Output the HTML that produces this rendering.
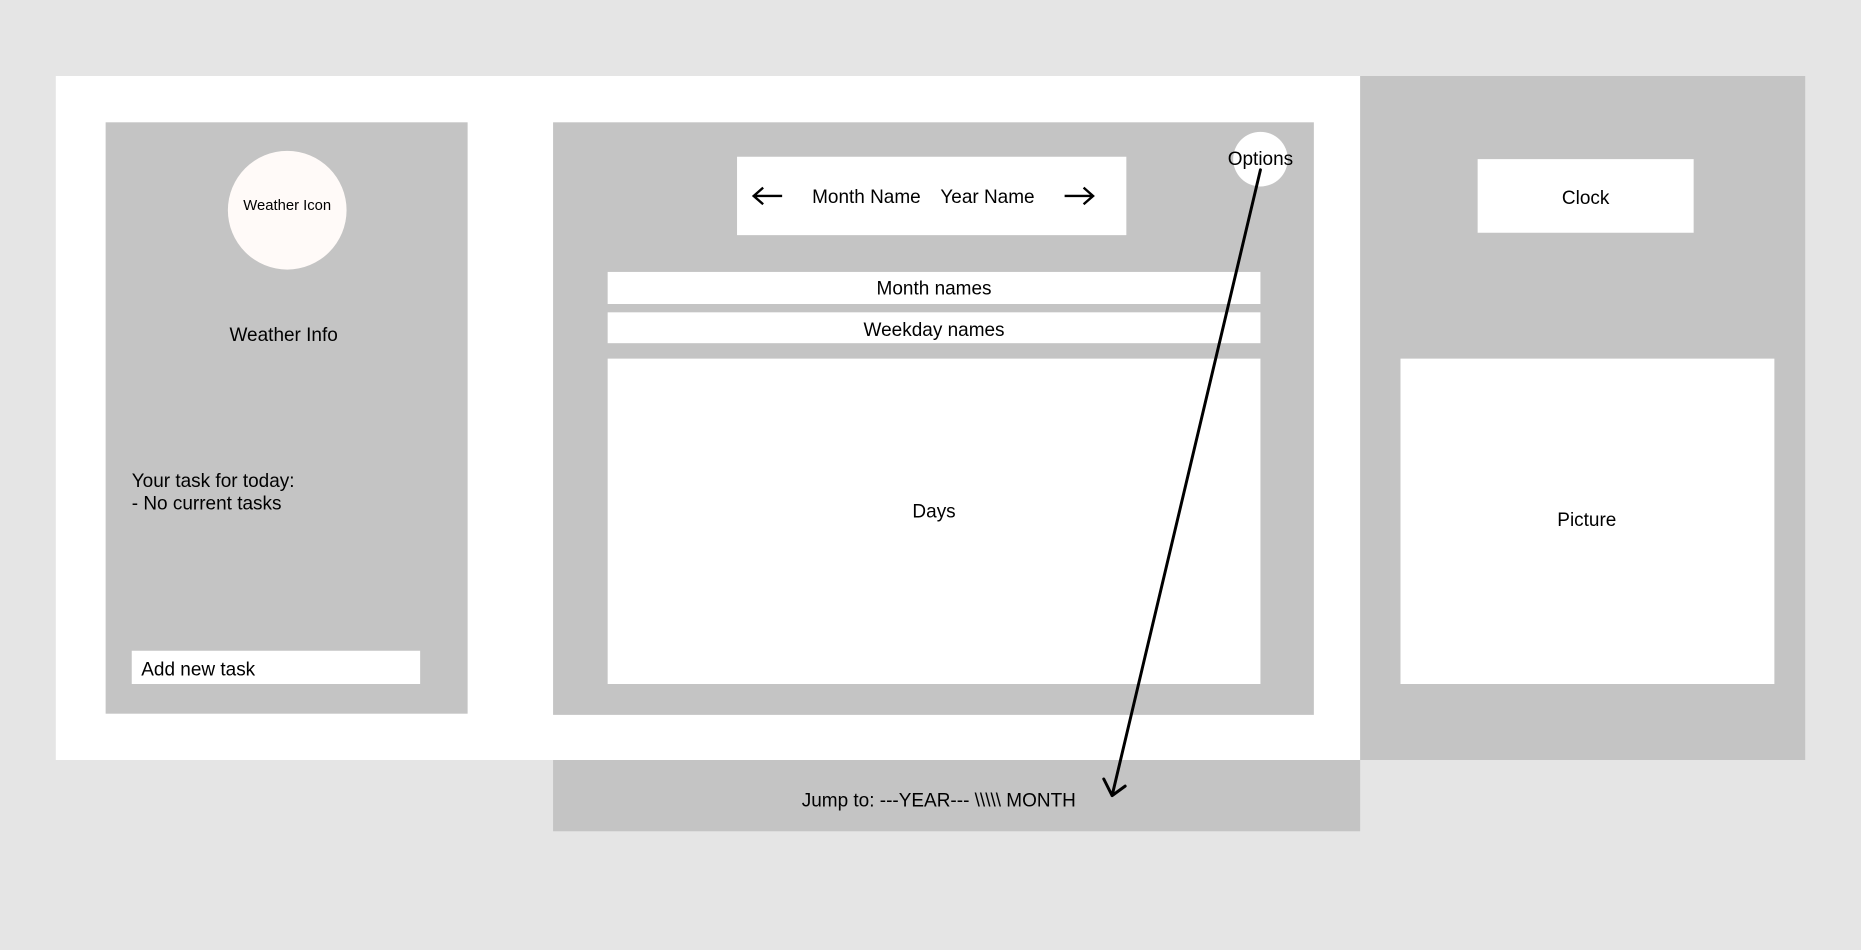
<!DOCTYPE html>
<html><head><meta charset="utf-8"><style>
html,body{margin:0;padding:0;background:#e5e5e5;overflow:hidden}
svg{display:block}
text{font-family:"Liberation Sans",sans-serif;fill:#000}
</style></head><body>
<svg width="1861" height="950" viewBox="0 0 1568 800" preserveAspectRatio="none" xmlns="http://www.w3.org/2000/svg">
<rect width="1568" height="800" fill="#e5e5e5"/>
<rect x="47" y="64" width="1099" height="576" fill="#fff"/>
<rect x="1146" y="64" width="375" height="576" fill="#c4c4c4"/>
<rect x="89" y="103" width="305" height="498" fill="#c4c4c4"/>
<circle cx="242" cy="177" r="50" fill="#fffaf8"/>
<text x="242" y="177" font-size="12.5" text-anchor="middle">Weather Icon</text>
<text x="239" y="287" font-size="16" text-anchor="middle">Weather Info</text>
<text x="111" y="410" font-size="16">Your task for today:</text>
<text x="111" y="429" font-size="16">- No current tasks</text>
<rect x="111" y="548" width="243" height="28" fill="#fff"/>
<text x="119" y="569" font-size="16">Add new task</text>
<rect x="466" y="103" width="641" height="499" fill="#c4c4c4"/>
<rect x="621" y="132" width="328" height="66" fill="#fff"/>
<path d="M635 165 H659 M643 158 L635 165 L643 172" stroke="#000" stroke-width="2" fill="none"/>
<path d="M897 165 H921 M913 158 L921 165 L913 172" stroke="#000" stroke-width="2" fill="none"/>
<text x="730" y="171" font-size="16" text-anchor="middle">Month Name</text>
<text x="832" y="171" font-size="16" text-anchor="middle">Year Name</text>
<circle cx="1062" cy="134" r="23" fill="#fff"/>
<text x="1062" y="139" font-size="16" text-anchor="middle">Options</text>
<rect x="512" y="229" width="550" height="27" fill="#fff"/>
<text x="787" y="248" font-size="16" text-anchor="middle">Month names</text>
<rect x="512" y="263" width="550" height="26" fill="#fff"/>
<text x="787" y="283" font-size="16" text-anchor="middle">Weekday names</text>
<rect x="512" y="302" width="550" height="274" fill="#fff"/>
<text x="787" y="436" font-size="16" text-anchor="middle">Days</text>
<rect x="1245" y="134" width="182" height="62" fill="#fff"/>
<text x="1336" y="172" font-size="16" text-anchor="middle">Clock</text>
<rect x="1180" y="302" width="315" height="274" fill="#fff"/>
<text x="1337" y="443" font-size="16" text-anchor="middle">Picture</text>
<rect x="466" y="640" width="680" height="60" fill="#c4c4c4"/>
<text x="791" y="679" font-size="16" text-anchor="middle">Jump to: ---YEAR--- \\\\\ MONTH</text>
<path d="M1062 143 L937 670 M930 656 L937 670 L948 662" stroke="#000" stroke-width="2.5" fill="none" stroke-linecap="round" stroke-linejoin="round"/>
</svg>
</body></html>
